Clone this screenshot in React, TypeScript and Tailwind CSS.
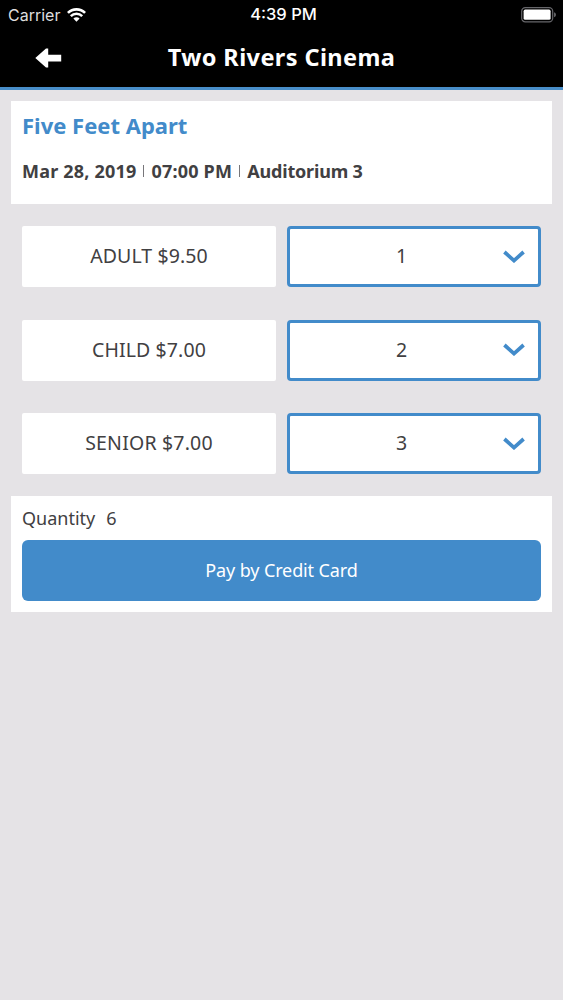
// App.tsx
import React, { useState } from "react";

const TICKETS = [
  { id: "adult", label: "ADULT $9.50", count: 1, labelClass: "tracking-[0.1px]" },
  { id: "child", label: "CHILD $7.00", count: 2, labelClass: "tracking-[0.1px]" },
  { id: "senior", label: "SENIOR $7.00", count: 3, labelClass: "tracking-[0.2px]" },
];

const WifiIcon: React.FC = () => (
  <svg className="ml-[7px] h-[14px] w-[19px]" viewBox="0 0 19 14" fill="none">
    <path d="M0.9 4.9a12.2 12.2 0 0 1 17.2 0" stroke="white" strokeWidth="2.7" />
    <path d="M3.8 8.1a8 8 0 0 1 11.4 0" stroke="white" strokeWidth="2.5" />
    <path d="M6.4 10.5a4.4 4.4 0 0 1 6.2 0L9.5 13.7z" fill="white" />
  </svg>
);

const BatteryIcon: React.FC = () => (
  <svg className="h-[16px] w-[36px]" viewBox="0 0 36 16">
    <rect x="0.7" y="0.6" width="31" height="14.2" rx="3.6" fill="none" stroke="#66666a" strokeWidth="1.2" />
    <rect x="2.6" y="2.6" width="27" height="10.2" rx="1.6" fill="white" />
    <path d="M33.2 5.2c1.2 0.5 1.6 1.4 1.6 2.5s-0.4 2-1.6 2.5z" fill="#77777a" />
  </svg>
);

const Divider: React.FC = () => <span className="mx-[7px] h-[12px] w-px bg-[#77767a]" />;

const App: React.FC = () => {
  const [tickets] = useState(TICKETS);
  const quantity = tickets.reduce((sum, t) => sum + t.count, 0);

  return (
    <div className="min-h-screen w-full bg-[#e5e3e6] font-['Noto_Sans',sans-serif] text-[#414042]">
      {/* Header */}
      <header className="h-[90px] border-b-[3px] border-[#488ec9] bg-black text-white">
        <div className="grid h-[29px] grid-cols-3 items-center pr-[6px] pl-[8px] font-['Inter',sans-serif] text-[16.5px]">
          <div className="flex items-center">
            <span className="text-[16px] text-[#dedede]">Carrier</span>
            <WifiIcon />
          </div>
          <span className="pl-[2px] text-center font-medium whitespace-nowrap">4:39 PM</span>
          <div className="flex justify-end">
            <BatteryIcon />
          </div>
        </div>
        <div className="grid h-[58px] grid-cols-[90px_1fr_90px] items-center">
          <button className="pb-[1px] pl-[35px]" aria-label="Back">
            <svg className="h-[20px] w-[27px]" viewBox="0 0 27 20">
              <path d="M0.3 10L11 0.4h2.2v6.4h13v6.6H13.2v6.2H11z" fill="white" />
            </svg>
          </button>
          <h1 className="text-center text-[23.5px] leading-none font-bold tracking-[0.4px] whitespace-nowrap">
            Two Rivers Cinema
          </h1>
        </div>
      </header>

      <main className="px-[11px] pt-[11px]">
        {/* Show info */}
        <section className="h-[103px] bg-white px-[11px] pt-[10px]">
          <h2 className="text-[22px] leading-[28px] font-bold text-[#428bca]">Five Feet Apart</h2>
          <div className="mt-[19px] flex items-center text-[18px] leading-[26px] font-bold whitespace-nowrap">
            <span className="tracking-[0.2px]">Mar 28, 2019</span>
            <Divider />
            <span className="tracking-[0.2px]">07:00 PM</span>
            <Divider />
            <span className="tracking-[-0.17px]">Auditorium 3</span>
          </div>
        </section>

        {/* Ticket rows */}
        <section className="flex flex-col gap-[32.5px] px-[11px] py-[22px]">
          {tickets.map((ticket) => (
            <div key={ticket.id} className="grid grid-cols-2 gap-[11px]">
              <div className="flex h-[61px] items-center justify-center rounded-[2px] bg-white pb-[1px] text-[19.5px]">
                <span className={ticket.labelClass}>{ticket.label}</span>
              </div>
              <button className="grid h-[61px] grid-cols-[99px_25px_1fr] items-center rounded-[4px] border-3 border-[#428bca] bg-white pr-[13px] pb-[1px] text-[19.5px]">
                <span />
                <span>{ticket.count}</span>
                <svg className="h-[13px] w-[22px] justify-self-end" viewBox="0 0 22 13" fill="none">
                  <path d="M1.4 2L11 10.6L20.6 2" stroke="#428bca" strokeWidth="3.7" />
                </svg>
              </button>
            </div>
          ))}
        </section>

        {/* Checkout */}
        <section className="h-[116px] bg-white px-[11px] pt-[9px]">
          <p className="text-[18px] leading-[27px]">
            <span>Quantity</span>
            <span className="ml-[11px]">{quantity}</span>
          </p>
          <button className="mt-[8px] h-[61px] w-full rounded-[6px] bg-[#428bca] text-[18px] tracking-[-0.12px] text-white">
            Pay by Credit Card
          </button>
        </section>
      </main>
    </div>
  );
};

export default App;
